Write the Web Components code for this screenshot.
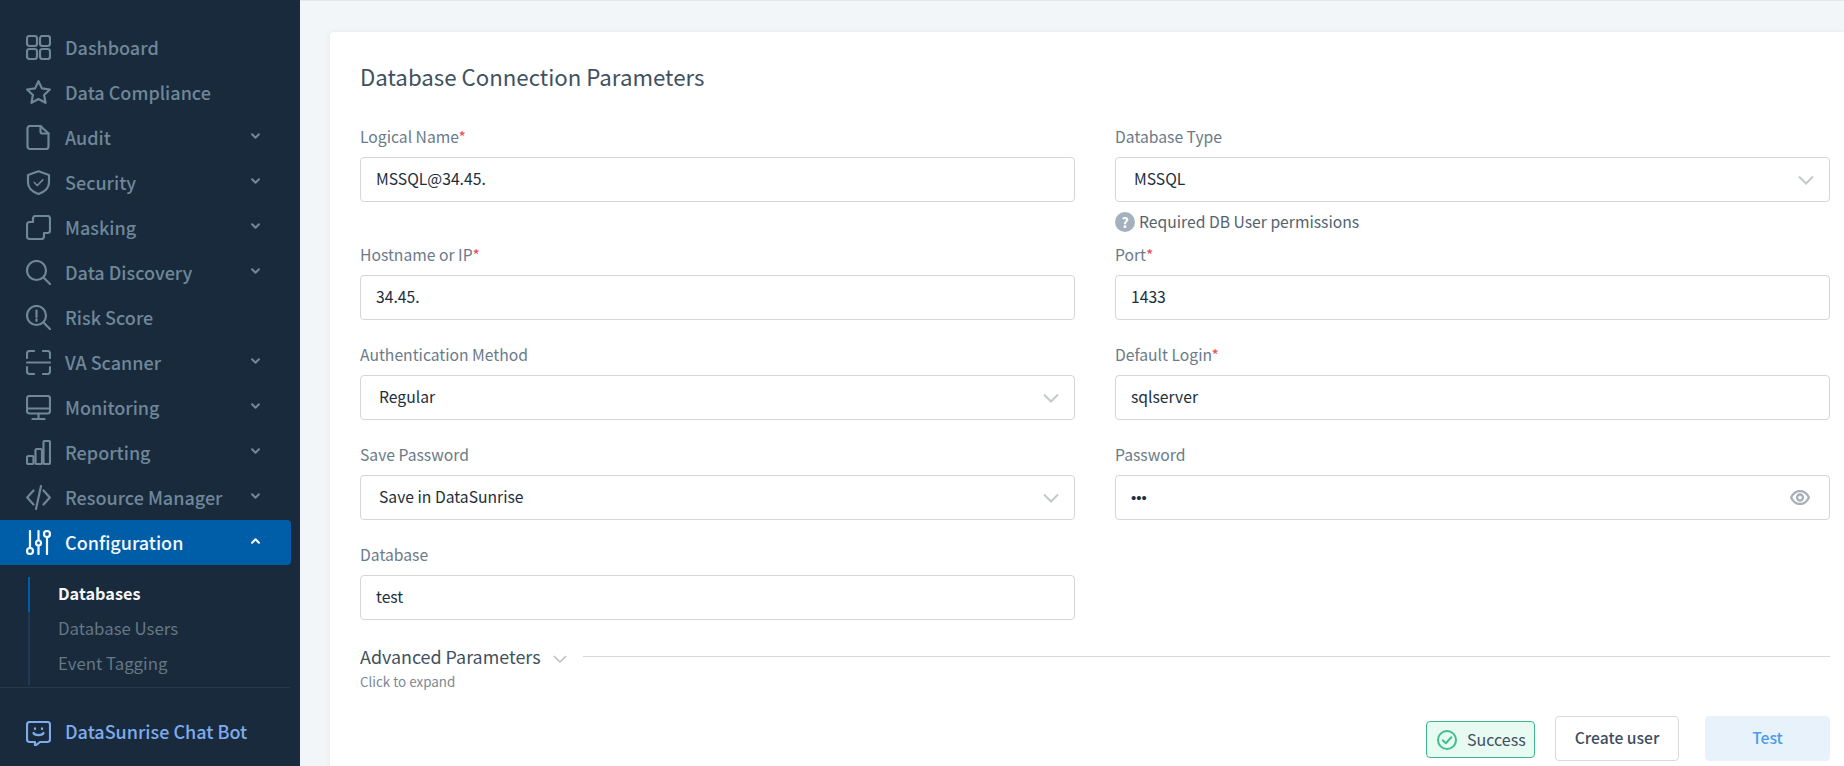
<!DOCTYPE html>
<html lang="en"><head><meta charset="utf-8"><title>Database Connection Parameters</title>
<style>
html,body{margin:0;height:100%;overflow:hidden;background:#f3f6f8;font-family:"Noto Sans CJK SC","Noto Sans",sans-serif}
</style></head><body>
<ds-app>
  <ds-sidebar slot="side">
    <ds-nav icon="dash" label="Dashboard"></ds-nav>
    <ds-nav icon="star" label="Data Compliance"></ds-nav>
    <ds-nav icon="doc" label="Audit" caret="down"></ds-nav>
    <ds-nav icon="shield" label="Security" caret="down"></ds-nav>
    <ds-nav icon="mask" label="Masking" caret="down"></ds-nav>
    <ds-nav icon="search" label="Data Discovery" caret="down"></ds-nav>
    <ds-nav icon="risk" label="Risk Score"></ds-nav>
    <ds-nav icon="scan" label="VA Scanner" caret="down"></ds-nav>
    <ds-nav icon="monitor" label="Monitoring" caret="down"></ds-nav>
    <ds-nav icon="bars" label="Reporting" caret="down"></ds-nav>
    <ds-nav icon="code" label="Resource Manager" caret="down"></ds-nav>
    <ds-nav icon="sliders" label="Configuration" caret="up" active></ds-nav>
    <ds-subnav>
      <ds-subitem active>Databases</ds-subitem>
      <ds-subitem>Database Users</ds-subitem>
      <ds-subitem>Event Tagging</ds-subitem>
    </ds-subnav>
    <ds-nav slot="foot" icon="chat" label="DataSunrise Chat Bot" accent></ds-nav>
  </ds-sidebar>
  <ds-card heading="Database Connection Parameters">
    <ds-field label="Logical Name" required value="MSSQL@34.45."></ds-field>
    <ds-field label="Database Type" kind="select" value="MSSQL" help="Required DB User permissions"></ds-field>
    <ds-field label="Hostname or IP" required value="34.45."></ds-field>
    <ds-field label="Port" required value="1433"></ds-field>
    <ds-field label="Authentication Method" kind="select" value="Regular"></ds-field>
    <ds-field label="Default Login" required value="sqlserver"></ds-field>
    <ds-field label="Save Password" kind="select" value="Save in DataSunrise"></ds-field>
    <ds-field label="Password" kind="password" value="•••"></ds-field>
    <ds-field label="Database" value="test"></ds-field>
    <ds-advanced slot="after"></ds-advanced>
    <ds-status slot="actions">Success</ds-status>
    <ds-button slot="actions">Create user</ds-button>
    <ds-button slot="actions" primary>Test</ds-button>
  </ds-card>
</ds-app>
<script>
const ICONS={
dash:'<rect x="1" y="1" width="10" height="10" rx="2.4"/><rect x="14" y="1" width="10" height="10" rx="2.4"/><rect x="1" y="14" width="10" height="10" rx="2.4"/><rect x="14" y="14" width="10" height="10" rx="2.4"/>',
star:'<path d="M12.5 1.200l3.400 7.200 8 1.100-5.800 5.500 1.400 7.800-7-3.800-7 3.800 1.400-7.800L1.100 9.500l8-1.100z"/>',
doc:'<path d="M4 1h10.500L22.500 8.500V21.500a2.500 2.500 0 0 1-2.500 2.500H4a2.500 2.500 0 0 1-2.500-2.500V3.500A2.500 2.500 0 0 1 4 1z"/><path d="M14.500 1v5.500a2 2 0 0 0 2 2h6"/>',
shield:'<path d="M12.500 1.200L23 5v7.500c0 5.500-4.300 9.300-10.500 11.500C6.300 21.800 2 18 2 12.500V5z"/><path d="M8.300 12.500l3 3 5.500-5.700" stroke-width="1.700"/>',
mask:'<path d="M9.500 1H21.500A2.500 2.500 0 0 1 24 3.500V15.500A2.500 2.500 0 0 1 21.500 18H18V21.500A2.500 2.500 0 0 1 15.500 24H3.500A2.500 2.500 0 0 1 1 21.500V9.500A2.500 2.500 0 0 1 3.500 7H7V3.500A2.500 2.500 0 0 1 9.500 1z"/>',
search:'<circle cx="10.500" cy="10.500" r="9.500"/><path d="M17.500 17.500l7 7"/>',
risk:'<circle cx="10.500" cy="10.500" r="9.500"/><path d="M17.500 17.500l7 7"/><path d="M10.500 5.500v6.500"/><path d="M10.500 14.300v1.700"/>',
scan:'<path d="M1 8V3.500A2.500 2.500 0 0 1 3.500 1H8M17 1h4.500A2.500 2.500 0 0 1 24 3.500V8M1 17v4.500A2.500 2.500 0 0 0 3.500 24H8M17 24h4.500a2.500 2.500 0 0 0 2.500-2.500V17"/><path d="M1 12.500h23"/>',
monitor:'<rect x="1" y="1" width="23" height="17.500" rx="2.500"/><path d="M1 13.500h23M12.500 18.500v5.500M6.500 24.200h12"/>',
bars:'<rect x="1" y="16" width="6.500" height="8" rx="1.300"/><rect x="9.500" y="9" width="6.500" height="15" rx="1.300"/><rect x="17.500" y="1" width="6.500" height="23" rx="1.300"/>',
code:'<path d="M7.500 5.500L1.200 12.500l6.300 7M17.500 5.500l6.300 7-6.300 7M15 1L10 24"/>',
sliders:'<path d="M4 1v16.500M12.500 1v9M12.500 16v8M21 8v16"/><circle cx="4" cy="21" r="3"/><circle cx="12.500" cy="13" r="2.500"/><circle cx="21" cy="4" r="3"/>',
chat:'<path d="M3.500 1h18A2.500 2.500 0 0 1 24 3.500v15a2.500 2.500 0 0 1-2.500 2.500H14l-5 4v-4H3.500A2.500 2.500 0 0 1 1 18.500v-15A2.500 2.500 0 0 1 3.500 1z"/><path d="M7.500 12c1 2.700 9 2.700 10 0"/><path d="M9 7.300v.8M16 7.300v.8" stroke-width="2.200"/>'
};
function def(name,css,html){
  customElements.define(name,class extends HTMLElement{
    constructor(){super();this.attachShadow({mode:'open'});}
    connectedCallback(){
      this.shadowRoot.innerHTML='<style>'+css+'</style>'+(typeof html==='function'?html(this):html);
    }
  });
}
const a=(e,n,d='')=>e.hasAttribute(n)?e.getAttribute(n):d;

def('ds-app',`:host{display:flex;width:1844px;height:766px;overflow:hidden}
main{flex:1;min-width:0;display:flex;flex-direction:column;border-top:1px solid #e3e7ea;padding:31px 0 0 30px;background:#f3f6f8}`,
`<slot name="side"></slot><main><slot></slot></main>`);

def('ds-sidebar',`:host{display:flex;flex-direction:column;box-sizing:border-box;width:300px;height:766px;background:#182a3b;padding-top:25px;flex:none}
.foot{margin-top:2px;border-top:1px solid #26384a;width:290px;padding-top:23px}`,
`<slot></slot><div class="foot"><slot name="foot"></slot></div>`);

def('ds-nav',`:host{display:block;height:45px;width:291px;flex:none}
.row{display:flex;align-items:center;height:45px;box-sizing:border-box;padding-left:26px;color:#6f8799;font-size:18px;font-weight:500;border-radius:0 4px 4px 0}
:host([active]) .row{background:#005ea8;color:#f4f8fb}
:host([accent]) .row{color:#7fabee}
svg.i{width:25px;height:25px;fill:none;stroke:currentColor;stroke-width:2.200;stroke-linecap:round;stroke-linejoin:round;flex:none;margin-right:14px}
.t{flex:1;line-height:24px;white-space:nowrap;padding-bottom:2px}
:host([accent]) .t{padding-bottom:5px}
svg.c{width:9px;height:6px;fill:none;stroke:currentColor;stroke-width:2.400;margin-right:31px;stroke-linecap:round;stroke-linejoin:round;position:relative;top:-2px}`,
e=>{const c=a(e,'caret');return `<div class="row"><svg class="i" viewBox="0 0 25 25">${ICONS[a(e,'icon')]}</svg><span class="t">${a(e,'label')}</span>${c?`<svg class="c" viewBox="0 0 10 7"><path d="${c==='up'?'M1 5.500l4-4 4 4':'M1 1.500l4 4 4-4'}"/></svg>`:''}</div>`});

def('ds-subnav',`:host{display:block;margin:12px 0 0 28px;border-left:2px solid #1f3a55;height:108px}`,`<slot></slot>`);
def('ds-subitem',`:host{display:block;height:35px;line-height:32px;padding-left:28px;margin-left:-2px;border-left:2px solid transparent;font-size:16.800px;color:#667786;white-space:nowrap}
:host([active]){color:#f4f6f8;font-weight:700;font-size:16.300px;border-left-color:#005ea8}`,`<slot></slot>`);

def('ds-card',`:host{display:block;flex:1;box-sizing:border-box;background:#fff;border-radius:4px 0 0 0;padding:30px 14px 0 30px;box-shadow:0 0 4px rgba(30,50,70,.08)}
h2{margin:0 0 33px;font-size:22.250px;font-weight:400;line-height:29px;height:32px;color:#40515f}
.grid{display:grid;grid-template-columns:1fr 1fr;column-gap:40px;row-gap:13px}
.actions{display:flex;justify-content:flex-end;align-items:center;margin-top:26px}`,
e=>`<h2>${a(e,'heading')}</h2><div class="grid"><slot></slot></div><slot name="after"></slot><div class="actions"><slot name="actions"></slot></div>`);

const CHEV='<svg class="ch" viewBox="0 0 16 10"><path d="M1 1.500l7 7 7-7"/></svg>';
const EYE='<svg class="eye" viewBox="0 0 20 15"><path d="M1 7.500C3.200 3.200 6.300 1 10 1s6.800 2.200 9 6.500c-2.200 4.300-5.300 6.500-9 6.500S3.200 11.800 1 7.500z"/><circle cx="10" cy="7.500" r="3"/></svg>';
def('ds-field',`:host{display:block;padding-bottom:12px}
:host([help]){padding-bottom:0}
label{display:block;height:20px;line-height:19px;font-size:15.700px;color:#6b7a89;margin-bottom:10px}
b{font-weight:400;color:#ef4c53}
.box{display:flex;align-items:center;box-sizing:border-box;height:45px;border:1px solid #d3d7da;border-radius:4px;background:#fff;padding:0 15px;font-size:15.700px;color:#1d2e3c}
.select{padding:0 15px 0 18px}
.v{flex:1;white-space:nowrap;line-height:20px;padding-bottom:2px}
.pw{font:15px/20px "Liberation Sans",sans-serif;padding:0}
svg.ch{width:16px;height:10px;fill:none;stroke:#c3c8cc;stroke-width:2}
svg.eye{width:20px;height:15px;fill:none;stroke:#a9b0b7;stroke-width:2.300;margin-right:4px}
.help{display:flex;align-items:center;height:20px;margin-top:10px;font-size:15.700px;color:#54636f;gap:4px}
.help span:last-child{padding-bottom:2px}
.q{width:20px;height:20px;border-radius:50%;background:#a3b1be;color:#fff;font-size:14px;font-weight:700;line-height:20px;text-align:center;flex:none}`,
e=>{const k=a(e,'kind'),h=a(e,'help');return `<label>${a(e,'label')}${e.hasAttribute('required')?'<b>*</b>':''}</label>
<div class="box ${k}"><span class="v ${k==='password'?'pw':''}">${a(e,'value')}</span>${k==='select'?CHEV:k==='password'?EYE:''}</div>${h?`<div class="help"><span class="q">?</span><span>${h}</span></div>`:''}`});

def('ds-advanced',`:host{display:block;margin-top:12px}
.top{display:flex;align-items:center;height:26px}
.t{font-size:17.900px;color:#40515f;line-height:24px;height:26px;white-space:nowrap}
svg{width:14px;height:9px;margin:5px 16px 0 12px;fill:none;stroke:#b5bbc0;stroke-width:1.400;flex:none}
i{flex:1;height:1px;background:#d6d9dc;display:block;position:relative;top:-1px}
.s{font-size:13.400px;line-height:18px;margin-top:2px;color:#7c8995}`,
`<div class="top"><span class="t">Advanced Parameters</span><svg viewBox="0 0 14 9"><path d="M1 1l6 6 6-6"/></svg><i></i></div><div class="s">Click to expand</div>`);

def('ds-button',`:host{display:block;margin-left:26px}
button{display:block;box-sizing:border-box;width:124px;height:45px;border:1px solid #d6dadd;border-radius:4px;background:#fff;color:#3f4e5d;font:500 15.700px "Noto Sans CJK SC","Noto Sans",sans-serif;padding:0 0 2px}
:host([primary]) button{width:125px;background:#e8f2fb;border-color:#e8f2fb;color:#4b9bef}`,`<button><slot></slot></button>`);

def('ds-status',`:host{display:flex;align-items:center;box-sizing:border-box;width:109px;height:37px;margin:2px -6px 0 0;border:1px solid #3db78a;border-radius:4px;background:#e8fbf3;padding:0 0 2px 10px;font-size:16px;color:#3f4e5d;gap:10px}
svg{width:20px;height:20px;fill:none;stroke:#3fbf8c;stroke-width:2;flex:none;position:relative;top:1px}`,
`<svg viewBox="0 0 20 20"><circle cx="10" cy="10" r="9"/><path d="M5.800 10.300l3 3 5.500-6" stroke-linecap="round" stroke-linejoin="round"/></svg><slot></slot>`);
</script>
</body></html>
